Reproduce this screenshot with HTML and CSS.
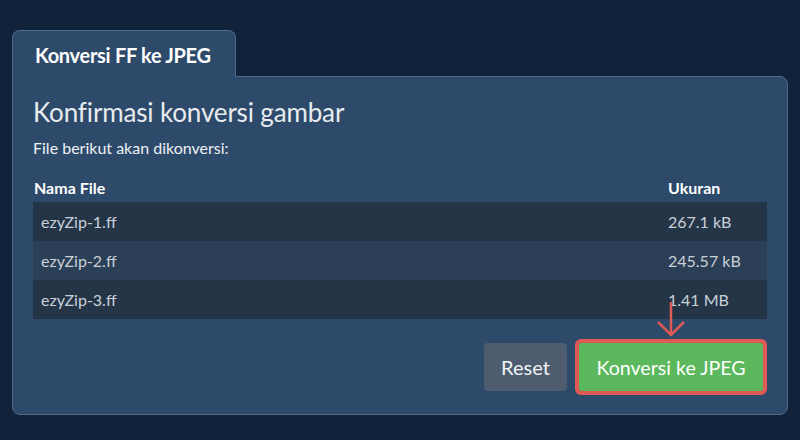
FILE: index.html
```html
<!DOCTYPE html>
<html lang="id">
<head>
<meta charset="utf-8">
<title>Konversi FF ke JPEG</title>
<link rel="stylesheet" href="styles.css">
</head>
<body>
<div class="wrap">
  <div class="tab">Konversi FF ke JPEG</div>
  <div class="panel">
    <h1 class="title">Konfirmasi konversi gambar</h1>
    <p class="sub">File berikut akan dikonversi:</p>
    <div class="table">
      <div class="thead">
        <div class="th name">Nama File</div>
        <div class="th size">Ukuran</div>
      </div>
      <div class="row odd"><div class="td name">ezyZip-1.ff</div><div class="td size">267.1 kB</div></div>
      <div class="row even"><div class="td name">ezyZip-2.ff</div><div class="td size">245.57 kB</div></div>
      <div class="row odd"><div class="td name">ezyZip-3.ff</div><div class="td size">1.41 MB</div></div>
    </div>
    <div class="actions">
      <button class="btn reset">Reset</button>
      <div class="primary-wrap">
        <svg class="arrow" width="28" height="38" viewBox="0 0 28 38">
          <line x1="14" y1="2" x2="14" y2="35" stroke="#e05a55" stroke-width="2.5"/>
          <polyline points="1,22 14,35 27,22" fill="none" stroke="#e05a55" stroke-width="2.5"/>
        </svg>
        <button class="btn convert">Konversi ke JPEG</button>
      </div>
    </div>
  </div>
</div>
</body>
</html>
```
FILE: styles.css
```css
* { box-sizing: border-box; }
html, body { margin: 0; padding: 0; }
body {
  background: #11233a;
  font-family: Lato, "Open Sans", sans-serif;
  color: #e9edf1;
  width: 800px;
  height: 440px;
  overflow: hidden;
}
.wrap {
  padding: 30px 12px 0 12px;
}
.tab {
  position: relative;
  z-index: 2;
  width: 224px;
  margin-bottom: -1px;
  padding: 12px 0 10px 22px;
  line-height: 24px;
  font-size: 20px;
  font-weight: 700;
  letter-spacing: -0.3px;
  color: #ffffff;
  background: #2d4a6a;
  border: 1px solid #4f6a89;
  border-bottom: none;
  border-radius: 8px 8px 0 0;
}
.panel {
  position: relative;
  z-index: 1;
  width: 776px;
  background: #2d4a6a;
  border: 1px solid #4f6a89;
  border-radius: 0 8px 8px 8px;
  padding: 19px 20px 23px 20px;
}
.title {
  margin: 0;
  font-size: 26px;
  line-height: 32px;
  font-weight: 400;
  letter-spacing: -0.15px;
  color: #e8ecef;
}
.sub {
  margin: 10px 0 0 0;
  font-size: 16px;
  line-height: 20px;
  color: #eef1f4;
}
.table {
  margin-top: 20px;
}
.thead, .row {
  display: grid;
  grid-template-columns: 1fr 99px;
}
.thead {
  padding-bottom: 4px;
}
.th {
  font-size: 16px;
  line-height: 20px;
  font-weight: 700;
  color: #ffffff;
}
.th.name { padding-left: 1px; }
.row {
  height: 39px;
  align-items: center;
}
.row.odd { background: #253548; }
.row.even { background: #2b3f56; }
.td {
  font-size: 16px;
  line-height: 20px;
  color: #c9d0d8;
}
.td.name { padding-left: 8px; }
.actions {
  display: flex;
  justify-content: flex-end;
  gap: 12px;
  margin-top: 24px;
  padding-right: 4px;
}
.btn {
  font-family: Lato, "Open Sans", sans-serif;
  font-size: 20px;
  height: 48px;
  border: none;
  border-radius: 4px;
  color: #f2f4f6;
  padding: 0;
}
.reset {
  background: #4d5d6f;
  width: 83px;
}
.primary-wrap {
  position: relative;
}
.convert {
  width: 184px;
  background: #5cb85c;
  color: #ffffff;
  font-size: 19.6px;
  outline: 4px solid #e05a55;
  outline-offset: 0;
  border-radius: 2px;
}
.arrow {
  position: absolute;
  left: 78px;
  top: -43px;
}
```
